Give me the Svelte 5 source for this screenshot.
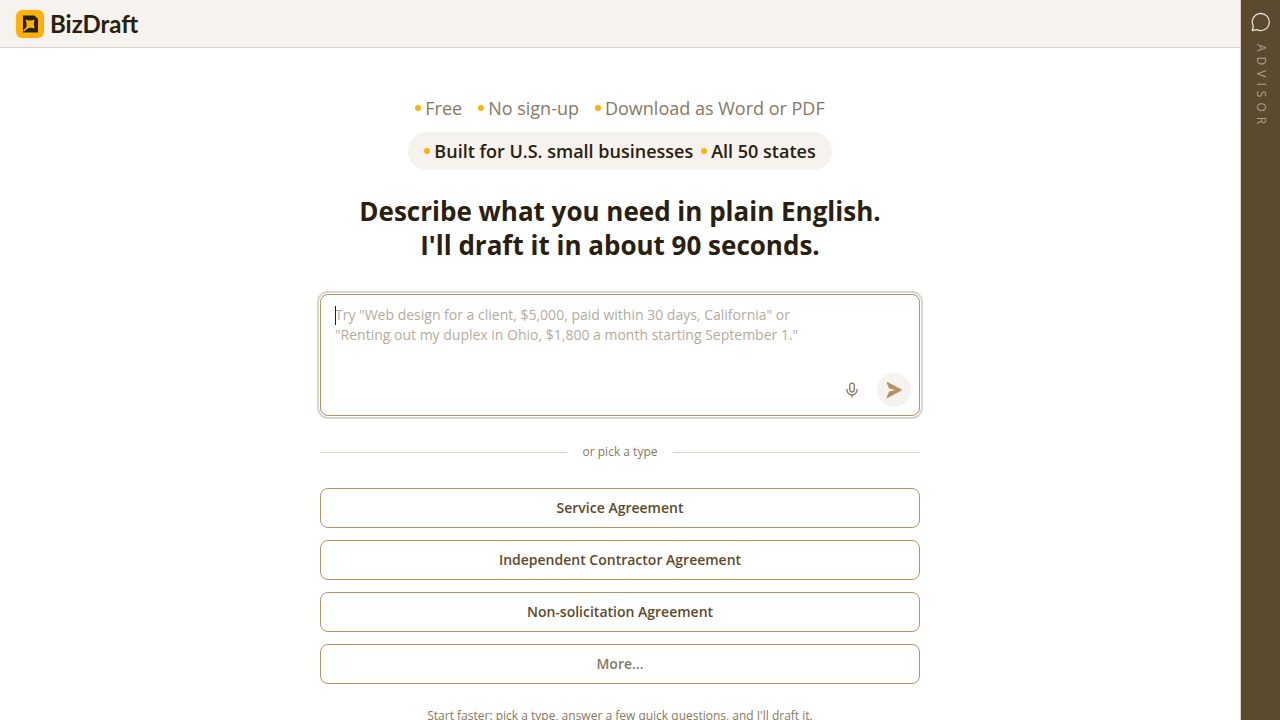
<script>
	import { onMount } from 'svelte'

	let prompt = $state('')
	let box

	const perks = ['Free', 'No sign-up', 'Download as Word or PDF']
	const badges = ['Built for U.S. small businesses', 'All 50 states']
	const types = ['Service Agreement', 'Independent Contractor Agreement', 'Non-solicitation Agreement']
	const placeholder = 'Try "Web design for a client, $5,000, paid within 30 days, California" or\n"Renting out my duplex in Ohio, $1,800 a month starting September 1."'

	onMount(() => box.focus())
</script>

<div class="app">
	<div class="page">
		<header>
			<a class="brand" href="/">
				<svg width="28" height="28" viewBox="0 0 28 28" aria-hidden="true">
					<rect width="28" height="28" rx="6" fill="#ffb00a" />
					<path d="M7 5.500h11.500L22 9v13.500H7z" fill="#2a2010" />
					<path d="M9.500 9.500Q14 11.500 18.500 9.500Q17.200 14 18.500 18.500Q15 17.200 12 18.200L8 21.500L7 20.500L10.500 17Q11 13 9.500 9.500z" fill="#ffb00a" />
				</svg>
				<span>BizDraft</span>
			</a>
		</header>

		<main>
			<ul class="perks">
				{#each perks as perk}
					<li>{perk}</li>
				{/each}
			</ul>
			<ul class="perks badge">
				{#each badges as badge}
					<li>{badge}</li>
				{/each}
			</ul>

			<h1>Describe what you need in plain English.<br />I'll draft it in about 90 seconds.</h1>

			<form class="prompt" class:empty={!prompt} onsubmit={(e) => e.preventDefault()}>
				<textarea bind:this={box} bind:value={prompt} {placeholder} aria-label="Describe your document"></textarea>
				<div class="actions">
					<button type="button" class="mic" aria-label="Dictate">
						<svg width="16" height="16" viewBox="0 0 16 16" fill="none" stroke="currentColor" stroke-width="1.300" stroke-linecap="round">
							<rect x="5.700" y="1.200" width="4.600" height="8.800" rx="2.300" />
							<path d="M3 7.500v.5a5 5 0 0 0 10 0v-.5M8 13v2" />
						</svg>
					</button>
					<button type="submit" class="send" aria-label="Send">
						<svg width="16" height="16" viewBox="0 0 16 16" fill="currentColor">
							<path d="M.8 1.200Q.2-.4 1.900.3L15.200 7.200Q16.300 8 15.200 8.800L1.900 15.700Q.2 16.400.8 14.800L3.200 9.600L9.500 8L3.200 6.400z" />
						</svg>
					</button>
				</div>
			</form>

			<div class="divider"><span>or pick a type</span></div>

			<div class="types">
				{#each types as type}
					<button type="button">{type}</button>
				{/each}
				<button type="button" class="more">More...</button>
			</div>

			<p class="hint">Start faster: pick a type, answer a few quick questions, and I'll draft it.</p>
		</main>
	</div>

	<button type="button" class="advisor">
		<svg width="20" height="20" viewBox="0 0 20 20" fill="none" stroke="currentColor" stroke-width="1.300" stroke-linejoin="round">
			<path d="M1.300 18.500L2.300 14A8.500 8.500 0 1 1 6 17.600z" />
		</svg>
		<span>ADVISOR</span>
	</button>
</div>

<style>
	:global(body) {
		margin: 0;
		background: #fff;
	}
	.app {
		display: flex;
		height: 100vh;
		font-family: "Open Sans", sans-serif;
		color: #2a2010;
	}
	.page {
		flex: 1;
		display: flex;
		flex-direction: column;
		min-width: 0;
	}
	header {
		display: flex;
		align-items: center;
		height: 47px;
		padding: 0 16px;
		background: #f6f2ed;
		border-bottom: 1px solid #d8d3cc;
	}
	.brand {
		display: flex;
		align-items: center;
		gap: 6px;
		color: #2a2010;
		text-decoration: none;
		font: 700 24px/28px Lato, sans-serif;
	}
	main {
		flex: 1;
		display: flex;
		flex-direction: column;
		align-items: center;
		min-height: 0;
		padding: 47px 24px 0;
		overflow-y: auto;
		scrollbar-width: none;
	}
	.perks {
		display: flex;
		flex-wrap: wrap;
		justify-content: center;
		gap: 0 16px;
		margin: 0;
		padding: 0;
		list-style: none;
		font-size: 18px;
		line-height: 26px;
		color: #857965;
	}
	.perks li {
		display: flex;
		align-items: center;
		gap: 4px;
	}
	.perks li::before {
		content: "";
		width: 6px;
		height: 6px;
		border-radius: 50%;
		background: #ffb00a;
	}
	.badge {
		gap: 0 8px;
		margin-top: 11px;
		padding: 6px 16px;
		border-radius: 19px;
		background: #f6f2ed;
		color: #2a2010;
		font-weight: 600;
	}
	h1 {
		margin: 24px 0 32px;
		font-size: 26px;
		font-weight: 700;
		line-height: 34px;
		text-align: center;
	}
	.prompt,
	.divider,
	.types {
		box-sizing: border-box;
		width: 100%;
		max-width: 600px;
		flex-shrink: 0;
	}
	.prompt {
		position: relative;
		border: 1px solid #b3925f;
		border-radius: 8px;
		outline: 2px solid #d8d5cf;
		outline-offset: 1px;
	}
	/* steady caret until something is typed */
	.empty:focus-within::before {
		content: "";
		position: absolute;
		top: 11px;
		left: 14px;
		width: 1px;
		height: 19px;
		background: #2a2010;
	}
	.empty textarea {
		caret-color: transparent;
	}
	textarea {
		display: block;
		box-sizing: border-box;
		width: 100%;
		height: 78px;
		padding: 10px 14px 0;
		border: 0;
		outline: 0;
		resize: none;
		background: none;
		font: 14px/20px "Open Sans", sans-serif;
		color: #2a2010;
	}
	textarea::placeholder {
		color: #b2aca1;
	}
	.actions {
		display: flex;
		justify-content: flex-end;
		align-items: center;
		gap: 8px;
		padding: 0 8px 8px;
	}
	.actions button {
		display: grid;
		place-items: center;
		width: 34px;
		height: 34px;
		padding: 0;
		border: 0;
		border-radius: 50%;
	}
	.mic {
		background: none;
		color: #857965;
	}
	.send {
		background: #f6f2ed;
		color: #b3925f;
	}
	.divider {
		display: flex;
		align-items: center;
		gap: 16px;
		margin: 27px 0;
		font-size: 12px;
		line-height: 18px;
		color: #857965;
	}
	.divider::before,
	.divider::after {
		content: "";
		flex: 1;
		height: 1px;
		background: #d5d2ca;
	}
	.types {
		display: flex;
		flex-direction: column;
		gap: 12px;
	}
	.types button {
		height: 40px;
		border: 1px solid #b3925f;
		border-radius: 8px;
		background: #fff;
		color: #5b4a2d;
		font: 600 14px/20px "Open Sans", sans-serif;
	}
	.types .more {
		color: #857965;
	}
	.hint {
		margin: 23px 0;
		font-size: 12px;
		line-height: 18px;
		color: #857965;
	}
	.advisor {
		display: flex;
		flex-direction: column;
		align-items: center;
		gap: 12px;
		width: 40px;
		padding: 12px 0 0;
		border: 0;
		border-left: 1px solid #d8d3cc;
		background: #5b4a2d;
		color: #e6e0d6;
	}
	.advisor span {
		writing-mode: vertical-rl;
		font: 12px/18px "Open Sans", sans-serif;
		letter-spacing: 5px;
		color: #aaa08e;
	}
</style>
